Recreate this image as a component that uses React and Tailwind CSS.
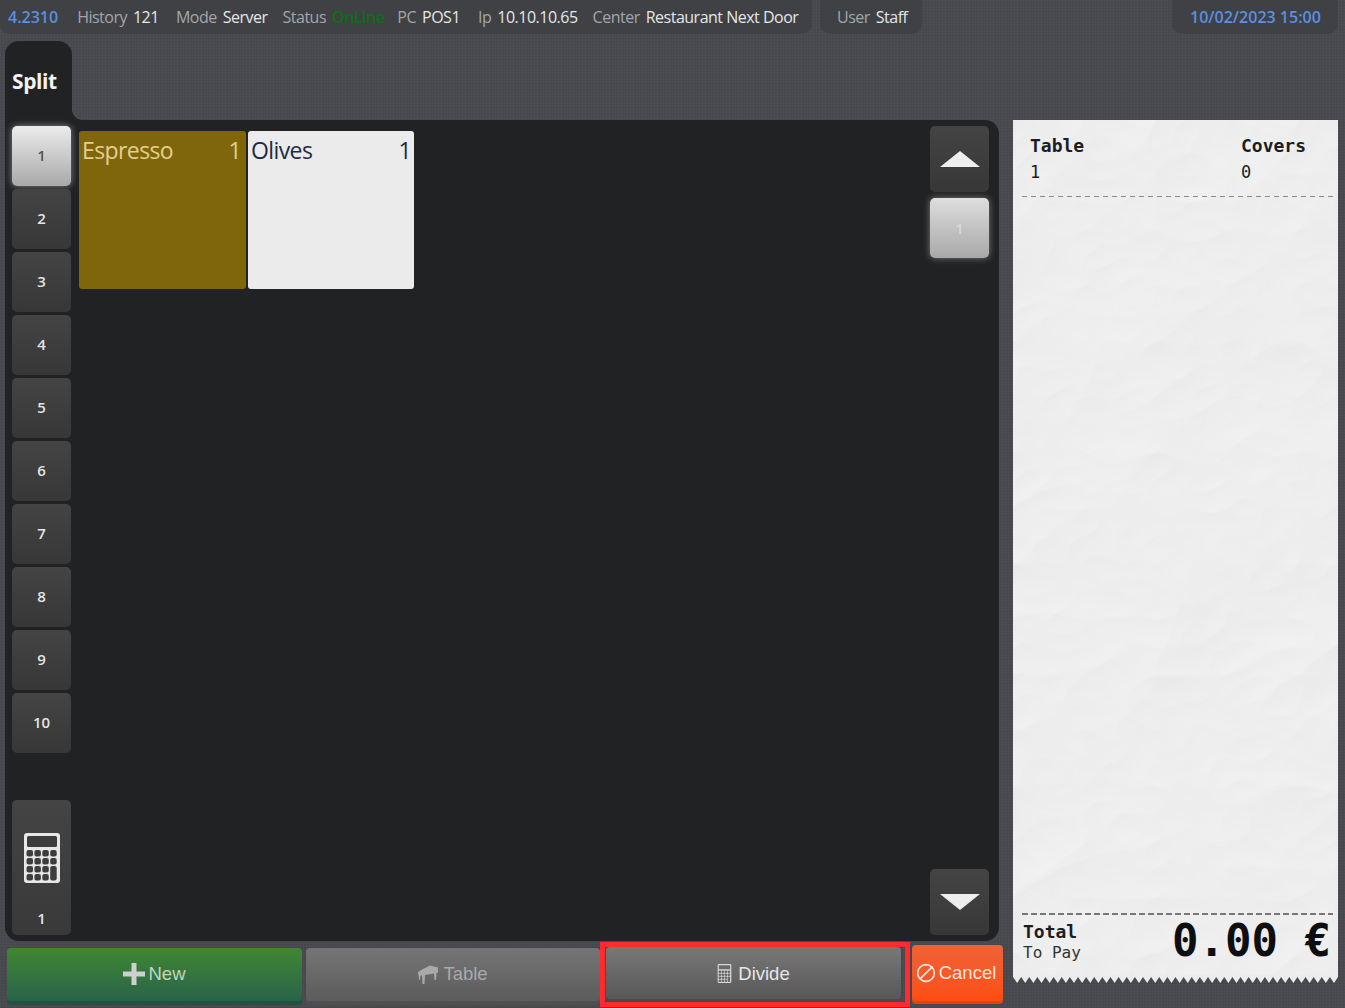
import { Ban } from "lucide-react";

const linen =
  "bg-[#484a4f] bg-[repeating-linear-gradient(90deg,rgba(255,255,255,0.018)_0px,rgba(255,255,255,0.018)_1px,transparent_1px,transparent_3px),repeating-linear-gradient(0deg,rgba(0,0,0,0.05)_0px,rgba(0,0,0,0.05)_1px,transparent_1px,transparent_3px)]";

const Info = ({ label, value, valueClass = "text-[#e4e6e8]", className = "" }) => (
  <span className={`flex gap-[6px] ${className}`}>
    <span className="text-[#a2a6ab]">{label}</span>
    <span className={valueClass}>{value}</span>
  </span>
);

const TopBar = () => (
  <div className="flex h-[34px] text-[16px] tracking-[-0.5px]">
    <div className="flex h-full w-[812px] items-center rounded-b-[10px] bg-[#3f4145] pl-[8px]">
      <span className="mr-[19px] font-semibold tracking-normal text-[#5c8fe0]">4.2310</span>
      <Info label="History" value="121" className="mr-[17px]" />
      <Info label="Mode" value="Server" className="mr-[15px]" />
      <Info label="Status" value="OnLine" valueClass="font-semibold text-[#0f6e14]" className="mr-[13px]" />
      <Info label="PC" value="POS1" className="mr-[18px]" />
      <Info label="Ip" value="10.10.10.65" className="mr-[15px]" />
      <Info label="Center" value="Restaurant Next Door" />
    </div>
    <div className="ml-[8px] flex h-full w-[102px] items-center rounded-b-[10px] bg-[#3f4145] pl-[17px]">
      <Info label="User" value="Staff" />
    </div>
    <div className="ml-[250px] flex h-full w-[166px] items-center rounded-b-[10px] bg-[#3f4145] pl-[18px] font-semibold tracking-normal text-[#5c8fe0]">
      10/02/2023 15:00
    </div>
  </div>
);

// white lattice with dark keys, last column has a tall key at the bottom
const CalcIcon = ({ className, key_ = "#3d3d3d", fg = "#e8e8e8" }) => (
  <svg viewBox="0 0 36 50" className={className}>
    <rect width="36" height="50" rx="3" fill={fg} />
    <rect x="3" y="3" width="30" height="11" rx="1.500" fill={key_} />
    {[0, 1, 2, 3].map((r) =>
      [0, 1, 2, 3].map((c) =>
        c === 3 && r === 3 ? null : (
          <rect
            key={`${r}-${c}`}
            x={2.5 + c * 7.9}
            y={17 + r * 8}
            width="6.500"
            height={c === 3 && r === 2 ? 14.500 : 6.500}
            rx="2"
            fill={key_}
          />
        )
      )
    )}
  </svg>
);

const SideButton = ({ n, active }) => (
  <div
    className={`flex h-[60px] w-[59px] shrink-0 items-center justify-center rounded-[5px] pb-[2px] text-[15px] font-semibold ${
      active
        ? "bg-gradient-to-b from-[#ececec] to-[#a9a9a9] text-[#555] shadow-[0_0_7px_rgba(255,255,255,0.45)]"
        : "bg-gradient-to-b from-[#444444] to-[#373737] text-[#e2e4e6]"
    }`}
  >
    {n}
  </div>
);

const ItemTile = ({ name, qty, className }) => (
  <div className={`flex h-[158px] items-start justify-between rounded-[3px] pl-[3px] text-[23px] leading-[38px] tracking-[-0.6px] ${className}`}>
    <span>{name}</span>
    <span>{qty}</span>
  </div>
);

const Arrow = ({ down }) => (
  <svg viewBox="0 0 40 16" className="h-[16px] w-[40px]" fill="#eeeeee">
    <path d={down ? "M0 0h40L20 16z" : "M20 0l20 16H0z"} />
  </svg>
);

const ScrollButton = ({ down }) => (
  <div className="flex h-[66px] w-[59px] items-center justify-center rounded-[5px] bg-gradient-to-b from-[#444444] to-[#373737]">
    <Arrow down={down} />
  </div>
);

const DarkPanel = () => (
  <div className="relative flex h-[821px] w-[994px] rounded-b-[14px] rounded-tr-[14px] bg-[#212224]">
    <div className="flex w-[74px] shrink-0 flex-col gap-[3px] pl-[7px] pt-[6px]">
      {[1, 2, 3, 4, 5, 6, 7, 8, 9, 10].map((n) => (
        <SideButton key={n} n={n} active={n === 1} />
      ))}
      <div className="mt-[44px] flex h-[135px] w-[59px] flex-col items-center rounded-[5px] bg-gradient-to-b from-[#444] to-[#393939] pt-[33px] text-[15px] font-semibold text-[#e2e4e6]">
        <CalcIcon className="h-[50px] w-[36px]" />
        <span className="mt-[24px]">1</span>
      </div>
    </div>
    <div className="flex flex-1 items-start gap-[2px] pt-[11px]">
      <ItemTile name="Espresso" qty="1" className="w-[167px] bg-[#7f660b] pr-[5px] text-[#e3cf8e]" />
      <ItemTile name="Olives" qty="1" className="w-[166px] bg-[#ebebeb] pr-[3px] text-[#1c2b45]" />
    </div>
    <div className="flex w-[69px] shrink-0 flex-col pt-[6px] pb-[6px]">
      <ScrollButton />
      <div className="mt-[6px] flex h-[60px] w-[59px] items-center justify-center rounded-[5px] bg-gradient-to-b from-[#dedede] to-[#a8a8a8] text-[15px] font-semibold text-[#d8d8d8] shadow-[0_0_7px_rgba(255,255,255,0.4)]">
        1
      </div>
      <div className="flex-1" />
      <ScrollButton down />
    </div>
  </div>
);

const TableIcon = () => (
  <svg viewBox="0 0 20 20" className="h-[20px] w-[20px]" fill="#a9a9a9">
    <path d="M0 8 5 5 12 1.500 20 3.500V8.500L18.500 9 18 16H16.500L16 9.500 7 11 6.500 20H4.500L4 11.500 2.500 11.500 2 16H1L.5 10.500 0 10z" />
  </svg>
);

const BottomBar = () => (
  <div className="flex h-[67px] items-start pt-[1px] font-['Liberation_Sans',sans-serif] text-[18.500px]">
    <div className="ml-[7px] mt-[6px] flex h-[57px] w-[295px] items-center justify-center gap-[3px] rounded-[4px] bg-gradient-to-b from-[#40872f] to-[#28604a] pb-[5px] text-[#c3d4bd] shadow-[inset_0_-4px_0_rgba(0,0,0,0.15)]">
      <svg viewBox="0 0 22 22" className="h-[22px] w-[22px]" fill="#cfcfcf">
        <path d="M8.500 0h5v8.500H22v5h-8.500V22h-5v-8.500H0v-5h8.500z" />
      </svg>
      New
    </div>
    <div className="ml-[4px] mt-[6px] flex h-[57px] w-[294px] items-center justify-center gap-[5px] rounded-[4px] bg-gradient-to-b from-[#757575] to-[#5a5a5a] pb-[5px] text-[#a9a9a9] shadow-[inset_0_-4px_0_rgba(0,0,0,0.12)]">
      <TableIcon />
      Table
    </div>
    <div className="h-[65px] w-[310px] shrink-0 border-[5px] border-[#ff2b2f] pl-[1px]">
      <div className="flex h-[55px] w-[295px] items-center justify-center gap-[6px] rounded-[4px] bg-gradient-to-b from-[#787878] to-[#565656] pb-[2px] text-[#e6e6e6] shadow-[inset_0_-3px_0_rgba(0,0,0,0.15)]">
        <CalcIcon className="h-[19px] w-[15px]" key_="#6a6a6a" fg="#d8d8d8" />
        Divide
      </div>
    </div>
    <div className="ml-[2px] mt-[3px] flex h-[59px] w-[91px] items-center justify-center gap-[3px] rounded-[4px] bg-gradient-to-b from-[#ee6336] to-[#fe4c0c] pb-[3px] pr-[3px] text-[#f5e6dd] shadow-[inset_0_-3px_0_rgba(0,0,0,0.1)]">
      <Ban className="h-[20px] w-[20px] shrink-0 -scale-x-100" strokeWidth={2} />
      Cancel
    </div>
  </div>
);

// crumpled paper, only a texture behind the receipt text
const PaperTexture = () => (
  <svg className="absolute inset-0 h-full w-full" aria-hidden="true">
    <filter id="paper" x="0" y="0" width="100%" height="100%" colorInterpolationFilters="sRGB">
      <feTurbulence type="turbulence" baseFrequency="0.007 0.009" numOctaves="3" seed="11" result="n" />
      <feDiffuseLighting in="n" lightingColor="#ffffff" surfaceScale="1" diffuseConstant="0.97" result="l">
        <feDistantLight azimuth="60" elevation="74" />
      </feDiffuseLighting>
    </filter>
    <rect width="100%" height="100%" filter="url(#paper)" />
  </svg>
);

const Dashes = ({ className }) => <div className={`relative ${className}`} />;

const Receipt = () => (
  <div className="mt-[86px] flex w-[325px] flex-col font-['DejaVu_Sans_Mono',monospace]">
    <div className="relative flex h-[855px] flex-col overflow-hidden bg-[#ececec] text-[#1b1d22]">
      <PaperTexture />
      <div className="relative flex h-[76px] justify-between pl-[17px] pr-[31px] pt-[12px]">
        <div className="text-[18px] leading-[27px]">
          <div className="font-bold">Table</div>
          <div className="text-[17px]">1</div>
        </div>
        <div className="w-[66px] text-[18px] leading-[27px]">
          <div className="font-bold">Covers</div>
          <div className="text-[17px]">0</div>
        </div>
      </div>
      <Dashes className="mx-[9px] mr-[5px] h-[1px] bg-[repeating-linear-gradient(90deg,#8a8a8a_0px,#8a8a8a_5px,transparent_5px,transparent_9px)]" />
      <div className="flex-1" />
      <Dashes className="mx-[9px] mr-[5px] h-[2px] bg-[repeating-linear-gradient(90deg,#777777_0px,#777777_6px,transparent_6px,transparent_9px)]" />
      <div className="relative ml-[10px] mr-[7px] flex h-[60px] items-start justify-between">
        <div className="pt-[6px]">
          <div className="text-[18px] font-bold leading-[22px]">Total</div>
          <div className="text-[16px] leading-[20px] text-[#333]">To Pay</div>
        </div>
        <div className="text-[44px] font-bold leading-[52px] text-[#0c0e12]">0.00 €</div>
      </div>
    </div>
    <svg viewBox="0 0 325 8" preserveAspectRatio="none" className="h-[8px] w-[325px]" fill="#ececec">
      <path
        d={`M0 0H325V2 ${Array.from({ length: 40 })
          .map((_, i) => `L${325 - i * 8.125 - 4} 8 L${325 - (i + 1) * 8.125} 2`)
          .join(" ")} Z`}
      />
    </svg>
  </div>
);

export default function App() {
  return (
    <div className={`h-[1008px] w-[1345px] overflow-hidden font-['Open_Sans',sans-serif] ${linen}`}>
      <TopBar />
      <div className="flex">
        <div className="ml-[5px] w-[1008px] shrink-0">
          <div className="mt-[7px] flex">
            <div className="flex h-[79px] w-[67px] items-center rounded-t-[14px] bg-[#212224] pl-[7px] pt-[3px] text-[21px] font-bold tracking-[-0.4px] text-[#f2f2f2]">
              Split
            </div>
            <div className="mt-[69px] h-[10px] w-[10px] bg-[radial-gradient(circle_at_100%_0,transparent_9.5px,#212224_10px)]" />
          </div>
          <DarkPanel />
          <div className="-ml-[5px]">
            <BottomBar />
          </div>
        </div>
        <Receipt />
      </div>
    </div>
  );
}
